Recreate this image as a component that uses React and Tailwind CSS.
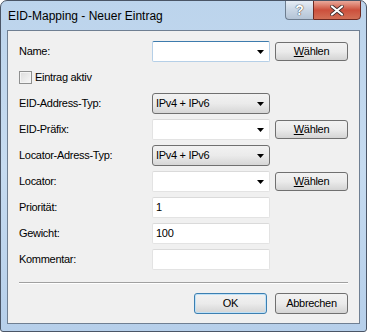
import React from 'react';

const labelCls = "text-[11px] tracking-[-0.3px] text-black leading-none";

function Arrow() {
  return (
    <svg width="7" height="4" viewBox="0 0 7 4" className="shrink-0">
      <path d="M0 0h7L3.5 4z" fill="#000" />
    </svg>
  );
}

function Combo({ focused }) {
  return (
    <div
      className={
        "h-[21px] w-[118px] bg-white flex items-center justify-end pr-[5px] rounded-[2px] border " +
        (focused
          ? "border-[#b5cfe7] border-t-[#3d7bad]"
          : "border-[#e3e3e3] border-t-[#dadada]")
      }
    >
      <Arrow />
    </div>
  );
}

function Select({ value }) {
  return (
    <div className="h-[21px] w-[118px] flex items-center justify-between pl-[3px] pr-[5px] rounded-[3px] border border-[#707070] bg-gradient-to-b from-[#f2f2f2] via-[#ebebeb] to-[#d6d6d6]">
      <span className={labelCls}>{value}</span>
      <Arrow />
    </div>
  );
}

function Input({ value }) {
  return (
    <div className="h-[21px] w-[118px] bg-white flex items-center pl-[3px] rounded-[2px] border border-[#e3e3e3] border-t-[#dadada]">
      <span className={labelCls}>{value}</span>
    </div>
  );
}

function Button({ children, primary, className = "" }) {
  return (
    <div
      className={
        "h-[19px] w-[73px] flex items-center justify-center rounded-[3px] border bg-gradient-to-b from-[#f2f2f2] via-[#ebebeb] to-[#d4d4d4] " +
        (primary ? "border-[#3c7fb1] shadow-[inset_0_0_0_1px_#bfe1f7] " : "border-[#707070] ") +
        className
      }
    >
      <span className={labelCls}>{children}</span>
    </div>
  );
}

const Waehlen = () => (
  <Button>
    <span className="underline underline-offset-[1px]">W</span>ählen
  </Button>
);

export default function App() {
  return (
    <div
      className="w-[367px] h-[332px] flex flex-col rounded-t-[7px] rounded-b-[3px] border border-[#4a5566] bg-gradient-to-b from-[#bcd4ec] via-[#c6dbf0] to-[#b6cfea] overflow-hidden"
      style={{ fontFamily: '"Liberation Sans", Arial, sans-serif' }}
    >
      {/* title bar */}
      <div className="h-[29px] flex items-start shrink-0 relative">
        <div className="pl-[7px] pt-[9px] text-[12px] leading-none text-black">
          EID-Mapping - Neuer Eintrag
        </div>
        <div className="ml-auto mr-[5px] flex -mt-px">
          <div className="w-[28px] h-[20px] rounded-bl-[4px] border border-[#6d7d8f] border-r-0 bg-gradient-to-b from-[#e6edf5] via-[#c9d6e4] to-[#b4c4d6] flex items-center justify-center text-white font-bold text-[14px] [text-shadow:0_0_1px_#333,0_0_1px_#333]">
            ?
          </div>
          <div className="w-[48px] h-[20px] rounded-br-[4px] border border-[#6e2a22] bg-gradient-to-b from-[#e9a99b] via-[#cc4f3c] to-[#d26f56] flex items-center justify-center">
            <svg width="14" height="11" viewBox="0 0 14 11">
              <path d="M2 1.5l10 8M12 1.5l-10 8" stroke="#3a2a2a" strokeWidth="3.6" strokeLinecap="round" />
              <path d="M2 1.5l10 8M12 1.5l-10 8" stroke="#fff" strokeWidth="2.2" strokeLinecap="round" />
            </svg>
          </div>
        </div>
      </div>

      {/* client area */}
      <div className="mx-[6px] flex-1 border border-[#6f7f92] bg-[#f0f0f0] flex flex-col pl-[11px] pr-[10px] pt-[10px]">
        <div className="grid grid-cols-[128px_118px_73px] gap-x-[5px] gap-y-[5px] items-center auto-rows-[21px]">
          <span className={labelCls}>Name:</span>
          <Combo focused />
          <Waehlen />

          <div className="col-span-3 flex items-center gap-[3px]">
            <div className="w-[13px] h-[13px] border border-[#8e8f8f] bg-gradient-to-br from-[#dcdcdc] to-[#f8f8f8] shadow-[inset_0_0_0_1px_#f4f4f4]" />
            <span className={labelCls}>Eintrag aktiv</span>
          </div>

          <span className={labelCls}>EID-Address-Typ:</span>
          <Select value="IPv4 + IPv6" />
          <div />

          <span className={labelCls}>EID-Präfix:</span>
          <Combo />
          <Waehlen />

          <span className={labelCls}>Locator-Adress-Typ:</span>
          <Select value="IPv4 + IPv6" />
          <div />

          <span className={labelCls}>Locator:</span>
          <Combo />
          <Waehlen />

          <span className={labelCls}>Priorität:</span>
          <Input value="1" />
          <div />

          <span className={labelCls}>Gewicht:</span>
          <Input value="100" />
          <div />

          <span className={labelCls}>Kommentar:</span>
          <Input value="" />
          <div />
        </div>

        <div className="mt-[12px] h-[2px] w-[329px] border-t border-[#a0a0a0] border-b border-b-white" />

        <div className="mt-[9px] flex justify-end gap-[8px] pr-[1px]">
          <Button primary className="h-[21px]">OK</Button>
          <Button className="h-[21px]">Abbrechen</Button>
        </div>
      </div>
      <div className="h-[7px] shrink-0" />
    </div>
  );
}
